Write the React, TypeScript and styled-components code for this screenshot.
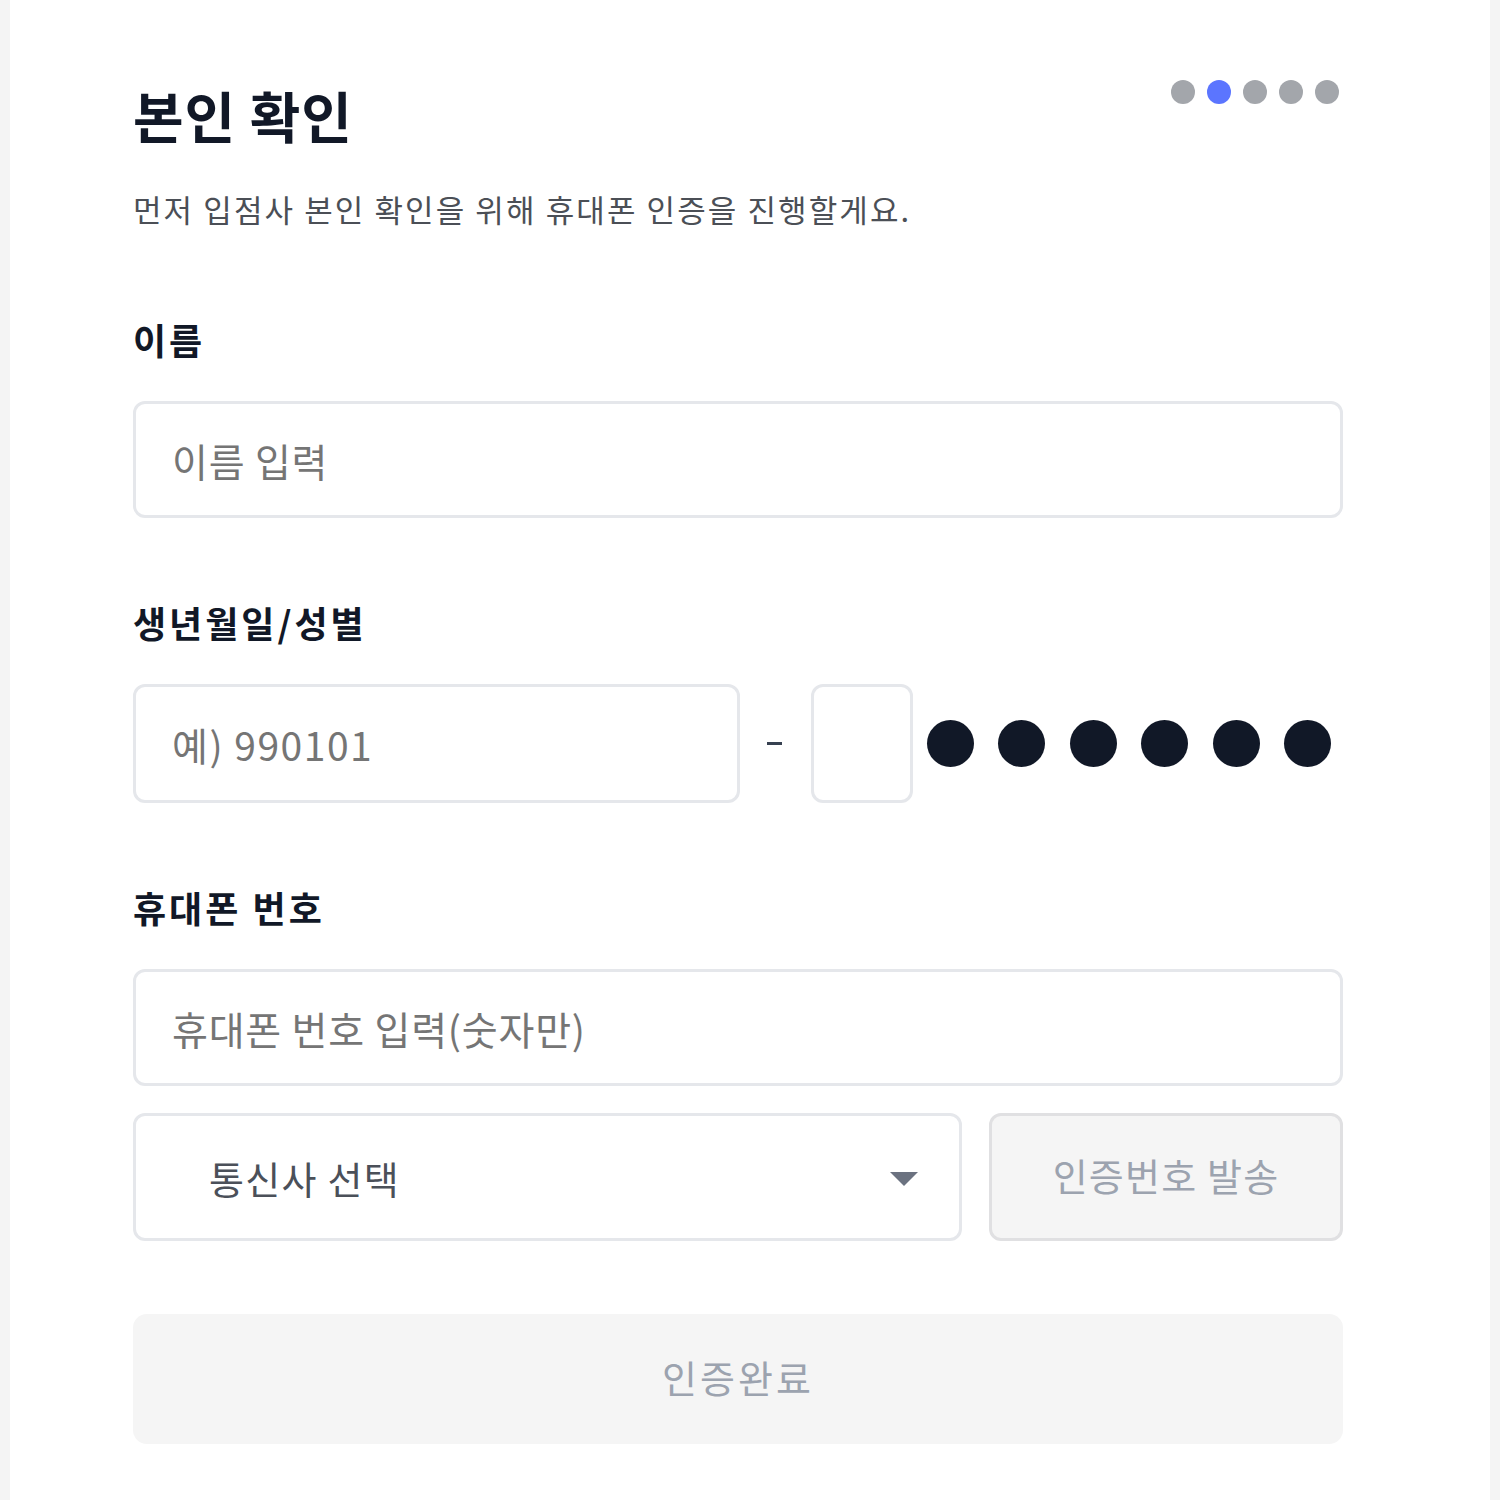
import React from 'react'
import styled, { createGlobalStyle } from 'styled-components';

const GlobalStyle = createGlobalStyle`
  html, body {
    margin: 0;
    padding: 0;
    background-color: #f4f4f4;
    font-family: "Noto Sans CJK KR", "Noto Sans", sans-serif;
  }
  * {
    box-sizing: border-box;
  }
`

const STEPS = 5;
const ACTIVE_STEP = 1;

export default function App() {
  return (
    <>
      <GlobalStyle />
      <Page>
        <Panel>
          <Header>
            <Title>본인 확인</Title>
            <Steps>
              {Array.from({ length: STEPS }).map((_, i) => (
                <StepDot key={i} $active={i === ACTIVE_STEP} />
              ))}
            </Steps>
          </Header>
          <Subtitle>먼저 입점사 본인 확인을 위해 휴대폰 인증을 진행할게요.</Subtitle>

          <Section>
            <Label>이름</Label>
            <TextInput type="text" placeholder="이름 입력" />
          </Section>

          <Section>
            <Label>생년월일/성별</Label>
            <BirthRow>
              <TextInput type="text" placeholder="예) 990101" />
              <Dash />
              <GenderInput type="text" maxLength={1} />
              <MaskDots>
                {Array.from({ length: 6 }).map((_, i) => (
                  <MaskDot key={i} />
                ))}
              </MaskDots>
            </BirthRow>
          </Section>

          <Section>
            <Label>휴대폰 번호</Label>
            <TextInput type="tel" placeholder="휴대폰 번호 입력(숫자만)" />
            <CarrierRow>
              <CarrierSelect>
                <span>통신사 선택</span>
                <Caret />
              </CarrierSelect>
              <SendButton disabled>인증번호 발송</SendButton>
            </CarrierRow>
          </Section>

          <SubmitButton disabled>인증완료</SubmitButton>
        </Panel>
      </Page>
    </>
  );
}

const Page = styled.div`
  min-height: 1500px;
  padding: 0 10px;
  display: flex;
`

const Panel = styled.div`
  flex: 1;
  background-color: #ffffff;
  padding: 79px 147px 60px 123px;
  display: flex;
  flex-direction: column;
`

const Header = styled.div`
  display: flex;
  justify-content: space-between;
  align-items: flex-start;
`

const Title = styled.h1`
  margin: 0;
  font-size: 55px;
  line-height: 70px;
  font-weight: 700;
  letter-spacing: 1px;
  color: #111827;
`

const Steps = styled.div`
  display: flex;
  gap: 12px;
  margin-top: 1px;
  margin-right: 4px;
`

const StepDot = styled.span<{ $active?: boolean }>`
  width: 24px;
  height: 24px;
  border-radius: 50%;
  background-color: ${p => (p.$active ? '#5b75ff' : '#a3a6ab')};
`

const Subtitle = styled.p`
  margin: 38px 0 0;
  font-size: 31px;
  line-height: 44px;
  color: #4b4f56;
  letter-spacing: 2.1px;
`

const Section = styled.div`
  display: flex;
  flex-direction: column;
  margin-top: 84px;

  & + & {
    margin-top: 80px;
  }
`

const Label = styled.label`
  font-size: 36px;
  line-height: 48px;
  font-weight: 700;
  color: #111827;
  letter-spacing: 3px;
  margin-bottom: 38px;
`

const TextInput = styled.input`
  width: 100%;
  min-width: 0;
  height: 117px;
  border: 3px solid #e5e7eb;
  border-radius: 12px;
  padding: 0 36px;
  font-family: "Noto Sans CJK KR", "Noto Sans", sans-serif;
  font-size: 39px;
  color: #111827;
  background-color: #ffffff;
  letter-spacing: 0.8px;
  :focus {
    outline: none;
  }
  ::placeholder {
    color: #9ca3af;
  }
`

const BirthRow = styled.div`
  display: flex;
  align-items: center;

  ${TextInput} {
    flex: 1;
    height: 119px;
    letter-spacing: 1.5px;
  }
`

const Dash = styled.span`
  width: 15px;
  height: 3px;
  background-color: #374151;
  margin: 0 29px 0 27px;
  flex-shrink: 0;
`

const GenderInput = styled.input`
  width: 102px;
  height: 119px;
  flex-shrink: 0;
  border: 3px solid #e5e7eb;
  border-radius: 12px;
  background-color: #ffffff;
  font-size: 38px;
  text-align: center;
  :focus {
    outline: none;
  }
`

const MaskDots = styled.div`
  display: flex;
  gap: 24.5px;
  margin-left: 14px;
  margin-right: 12px;
  flex-shrink: 0;
`

const MaskDot = styled.span`
  width: 47px;
  height: 47px;
  border-radius: 50%;
  background-color: #111827;
`

const CarrierRow = styled.div`
  display: flex;
  gap: 27px;
  margin-top: 27px;
`

const CarrierSelect = styled.div`
  flex: 1;
  height: 128px;
  border: 3px solid #e5e7eb;
  border-radius: 12px;
  padding: 0 41px 0 73px;
  display: flex;
  align-items: center;
  justify-content: space-between;
  font-size: 38px;
  color: #4b5059;
  letter-spacing: 1.3px;
  cursor: pointer;
`

const Caret = styled.span`
  width: 0;
  height: 0;
  border-left: 14px solid transparent;
  border-right: 14px solid transparent;
  border-top: 14px solid #6b7280;
  margin-top: 4px;
`

const SendButton = styled.button`
  width: 354px;
  height: 128px;
  flex-shrink: 0;
  border: 3px solid #e0e0e2;
  border-radius: 12px;
  background-color: #f5f5f5;
  font-family: "Noto Sans CJK KR", "Noto Sans", sans-serif;
  font-size: 38px;
  color: #9ca3af;
  letter-spacing: 1.2px;
  padding: 0 0 6px;
`

const SubmitButton = styled.button`
  margin-top: 73px;
  width: 100%;
  height: 130px;
  border: none;
  border-radius: 14px;
  background-color: #f5f5f5;
  font-family: "Noto Sans CJK KR", "Noto Sans", sans-serif;
  font-size: 38px;
  color: #9ca3af;
  letter-spacing: 3px;
  padding: 0 0 6px;
`
